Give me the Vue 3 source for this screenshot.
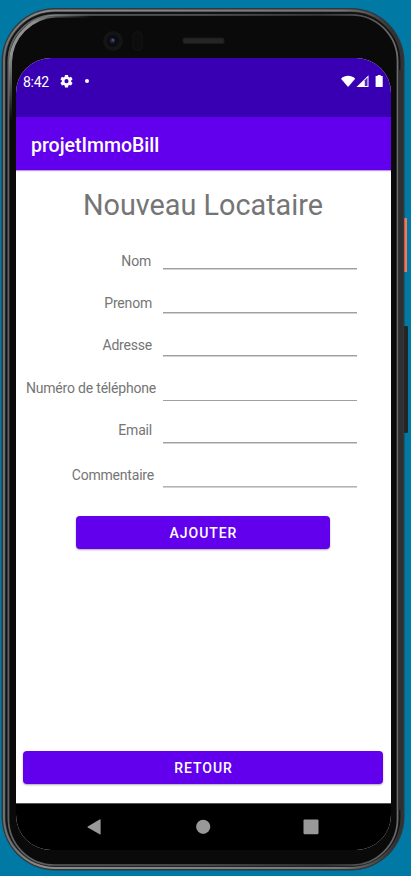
<script setup>
const fields = [
  { id: 'nom', label: 'Nom', kind: 'nom' },
  { id: 'prenom', label: 'Prenom', kind: 'prenom' },
  { id: 'adresse', label: 'Adresse', kind: 'adresse' },
  { id: 'telephone', label: 'Numéro de téléphone', kind: 'telephone' },
  { id: 'email', label: 'Email', kind: 'email' },
  { id: 'commentaire', label: 'Commentaire', kind: 'commentaire' }
]
</script>

<template>
  <div class="stage">
    <svg class="device" viewBox="0 0 411 876" aria-hidden="true">
      <defs>
        <linearGradient id="rim" x1="0" y1="0" x2="1" y2="0">
          <stop offset="0" stop-color="#6d7172" />
          <stop offset="0.1" stop-color="#8b8b8d" />
          <stop offset="0.85" stop-color="#77777a" />
          <stop offset="0.98" stop-color="#303233" />
        </linearGradient>
        <linearGradient id="inner" x1="0" y1="0" x2="1" y2="0">
          <stop offset="0" stop-color="#5f6362" />
          <stop offset="0.5" stop-color="#585858" />
          <stop offset="0.8" stop-color="#393939" />
          <stop offset="1" stop-color="#6c6a6a" />
        </linearGradient>
        <linearGradient id="glint" gradientUnits="userSpaceOnUse" x1="10" y1="120" x2="90" y2="15">
          <stop offset="0" stop-color="#bcbebd" stop-opacity="0" />
          <stop offset="0.4" stop-color="#bcbebd" />
          <stop offset="0.7" stop-color="#bcbebd" />
          <stop offset="1" stop-color="#bcbebd" stop-opacity="0" />
        </linearGradient>
        <linearGradient id="power" x1="0" y1="0" x2="1" y2="0">
          <stop offset="0" stop-color="#b94a38" />
          <stop offset="0.5" stop-color="#ed765f" />
          <stop offset="1" stop-color="#e88368" />
        </linearGradient>
      </defs>
      <rect x="1.5" y="8" width="403" height="862.5" rx="54" fill="#343637" />
      <rect x="4" y="10.5" width="398" height="857.5" rx="51" fill="none" stroke="url(#rim)" stroke-width="2" />
      <rect x="6.5" y="13" width="393" height="852.5" rx="49" fill="none" stroke="#111214" stroke-width="2" />
      <rect x="8.5" y="15" width="389" height="850" rx="46" fill="#0a0a0b" stroke="url(#inner)" stroke-width="1.7" />
      <path d="M400.5 70V810" stroke="#2d2f30" stroke-width="4" />
      <path d="M10.5 120V62C11 37 31 17 56 16H95" fill="none" stroke="url(#glint)" stroke-width="3" opacity=".75" />
      <rect x="404" y="218" width="3" height="54" rx=".5" fill="url(#power)" />
      <rect x="404" y="326" width="4" height="107" rx="1" fill="#242625" />
      <circle cx="113" cy="41" r="10" fill="#141415" />
      <circle cx="113" cy="41" r="6" fill="#0a0c12" />
      <circle cx="112.5" cy="40.5" r="2.5" fill="#272c3d" />
      <circle cx="113" cy="40" r=".8" fill="#797f91" />
      <rect x="133" y="32" width="9" height="18" rx="3" fill="#0d0d0e" stroke="#141415" />
      <rect x="183" y="38" width="41" height="5.5" rx="1.5" fill="#252525" stroke="#1b1b1b" />
    </svg>

    <main class="screen">
      <header>
        <div class="status">
          <span class="clock">8:42</span>
          <svg class="gear" viewBox="0 0 24 24"><path fill="#fff" fill-rule="evenodd" d="M9.2 0h5.6l.6 3.4 1.8 1 3.2-1.2 2.8 4.8-2.6 2.2v2.4l2.6 2.2-2.8 4.8-3.2-1.2-1.8 1-.6 3.6H9.2l-.6-3.6-1.8-1-3.2 1.2L.8 14.8l2.6-2.2v-2.4L.8 8l2.8-4.8 3.2 1.2 1.8-1zM12 7.6a3.8 3.8 0 1 0 0 7.6 3.8 3.8 0 0 0 0-7.6z" /></svg>
          <i class="dot"></i>
          <svg class="signals" viewBox="0 0 43 14">
            <path d="M0 3.7C4-.1 10.2-.1 14.2 3.7L7.1 12z" fill="#fff" />
            <path d="M15.5 12 27.5.2V12z" fill="#fff" />
            <path d="M23.8 5.2 26.5 2.6v8.4h-2.7z" fill="#512bc0" />
            <path d="M34.6 1.1h2V0h3.1v1.1h2V12h-7.1z" fill="#fff" />
          </svg>
        </div>
        <div class="appbar">projetImmoBill</div>
      </header>

      <section class="content">
        <h1>Nouveau Locataire</h1>
        <form @submit.prevent>
          <div v-for="field in fields" :key="field.id" class="field" :class="field.kind">
            <label :for="field.id">{{ field.label }}</label>
            <input :id="field.id" type="text" autocomplete="off">
          </div>
          <button class="add" type="submit">AJOUTER</button>
        </form>
        <button class="back" type="button">RETOUR</button>
      </section>

      <nav>
        <svg class="nav-icons" viewBox="0 0 375 47">
          <path d="M71.8 23.4 83.6 16.5q1-.5 1 .6v13.7q0 1-1 .5L71.8 24.5q-.8-.5 0-1.1z" fill="#999" />
          <circle cx="187.2" cy="23.8" r="7.1" fill="#999" />
          <rect x="287.5" y="16.4" width="15" height="14.8" rx="1.2" fill="#999" />
        </svg>
      </nav>
    </main>
  </div>
</template>

<style>
body { margin: 0; background: #0079a5; }
</style>

<style scoped>
* { box-sizing: border-box; }
.stage {
  position: relative;
  width: 411px;
  height: 876px;
  padding: 58px 20px 26px 16px;
  overflow: hidden;
  background: #0079a5;
  font-family: Roboto, sans-serif;
}
.device { position: absolute; inset: 0; width: 411px; height: 876px; }
.screen {
  position: relative;
  display: flex;
  flex-direction: column;
  width: 375px;
  height: 792px;
  overflow: hidden;
  border-radius: 35px;
  background: #fff;
}
header { flex: none; color: #fff; }
.status {
  display: flex;
  align-items: flex-start;
  height: 59px;
  padding: 16px 7px 0;
  background: #3900b3;
}
.clock { width: 37px; font-size: 14px; line-height: 16px; letter-spacing: -.3px; }
.gear { width: 13px; height: 13px; margin-top: 1px; }
.dot { width: 4px; height: 4px; margin: 5px 0 0 12px; border-radius: 50%; background: #fff; }
.signals { width: 43px; height: 14px; margin: 1px 0 0 auto; }
.appbar {
  height: 53px;
  padding-left: 15px;
  background: #6200ed;
  box-shadow: 0 1px 1px #b79de0;
  font-size: 19.5px;
  font-weight: 500;
  line-height: 57px;
}
.content {
  display: flex;
  flex: 1;
  flex-direction: column;
  padding: 17px 8px 19px 7px;
}
h1 {
  margin: 0;
  color: #757575;
  font-size: 28.8px;
  font-weight: 400;
  line-height: 36px;
  text-align: center;
}
form { display: flex; flex-direction: column; }
.field { display: flex; align-items: flex-start; height: 43px; color: #757575; }
label {
  width: 140px;
  padding-top: 1px;
  font-size: 14px;
  line-height: 18px;
  letter-spacing: -.2px;
  text-align: right;
  white-space: nowrap;
}
input {
  width: 194px;
  height: 19px;
  margin: 0;
  padding: 0;
  border: 0;
  border-bottom: 1px solid #a0a0a0;
  outline: 0;
  box-shadow: 0 1px #d2d2d2;
  background: transparent;
}
.nom { height: 42px; margin-top: 28px; }
.nom input { height: 18px; }
.nom label { padding-right: 12px; }
.prenom label, .adresse label, .email label { padding-right: 11px; }
.prenom { height: 42px; }
.adresse { height: 43px; }
.adresse input { height: 21px; }
.prenom input { height: 20px; }
.telephone { height: 42px; }
.telephone label { padding-right: 7px; }
.telephone input { height: 23px; box-shadow: none; }
.email { height: 45px; }
.email input { height: 23px; }
.commentaire { height: 51px; }
.commentaire label { padding-right: 9px; }
.commentaire input { height: 22px; border-color: #b4b4b4; }
button {
  height: 33px;
  margin: 0;
  padding: 0;
  border: 0;
  border-radius: 4px;
  background: #6200ed;
  box-shadow: 0 1px 2px #0005;
  color: #fff;
  font: 500 14px/34px Roboto, sans-serif;
  letter-spacing: .95px;
  text-indent: 1px;
}
.add { width: 254px; margin-left: 53px; }
.back { width: 360px; margin-top: auto; }
nav { flex: none; height: 47px; border-top: 1px solid #555; background: #000; }
.nav-icons { display: block; width: 375px; height: 47px; margin-top: -1px; }
</style>
